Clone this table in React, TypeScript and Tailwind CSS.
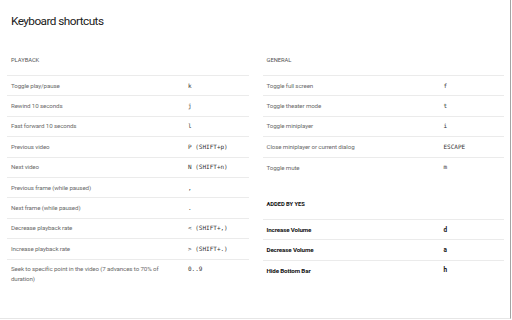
import React from 'react';

interface Shortcut {
  label: string;
  keys: string;
}

const PLAYBACK: Shortcut[] = [
  { label: 'Toggle play/pause', keys: 'k' },
  { label: 'Rewind 10 seconds', keys: 'j' },
  { label: 'Fast forward 10 seconds', keys: 'l' },
  { label: 'Previous video', keys: 'P (SHIFT+p)' },
  { label: 'Next video', keys: 'N (SHIFT+n)' },
  { label: 'Previous frame (while paused)', keys: ',' },
  { label: 'Next frame (while paused)', keys: '.' },
  { label: 'Decrease playback rate', keys: '< (SHIFT+,)' },
  { label: 'Increase playback rate', keys: '> (SHIFT+.)' },
  { label: 'Seek to specific point in the video (7 advances to 70% of duration)', keys: '0..9' },
];

const GENERAL: Shortcut[] = [
  { label: 'Toggle full screen', keys: 'f' },
  { label: 'Toggle theater mode', keys: 't' },
  { label: 'Toggle miniplayer', keys: 'i' },
  { label: 'Close miniplayer or current dialog', keys: 'ESCAPE' },
  { label: 'Toggle mute', keys: 'm' },
];

const ADDED: Shortcut[] = [
  { label: 'Increase Volume', keys: 'd' },
  { label: 'Decrease Volume', keys: 'a' },
  { label: 'Hide Bottom Bar', keys: 'h' },
];

const SectionHeader = ({ title, strong }: { title: string; strong?: boolean }) => (
  <div
    className={`h-[30px] flex items-center pl-[4px] text-[5.8px] uppercase tracking-[-0.05px] ${
      strong ? 'font-bold text-[#111]' : 'text-[#555]'
    }`}
  >
    {title}
  </div>
);

const ShortcutList = ({ items, strong }: { items: Shortcut[]; strong?: boolean }) => (
  <div className="border-t border-[#ebebeb] divide-y divide-[#ebebeb]">
    {items.map(item => (
      <div key={item.label} className="flex items-center min-h-[20.4px] py-[4.7px] pl-[4px] leading-[10px]">
        <div
          className={`w-[177px] shrink-0 pr-[16px] text-[6.2px] tracking-[-0.12px] ${
            strong ? 'font-bold text-[#111]' : 'text-[#6b6b6b]'
          }`}
        >
          {item.label}
        </div>
        <div
          className={
            strong
              ? 'self-start text-[6.4px] font-bold text-[#111]'
              : "self-start text-[6px] text-[#333] font-['DejaVu_Sans_Mono',monospace]"
          }
        >
          {item.keys}
        </div>
      </div>
    ))}
  </div>
);

export default function App() {
  return (
    <div className="w-[511px] h-[319px] bg-white border-r border-b border-r-[#a3a3a3] border-b-[#e6e6e6] font-['Roboto',sans-serif] overflow-hidden">
      <h1 className="pl-[11px] pt-[13px] text-[11.8px] leading-[16px] tracking-[-0.55px] text-[#212121] font-normal">
        Keyboard shortcuts
      </h1>
      <div className="mt-[16px] pl-[7px] pr-[6px] grid grid-cols-2 gap-x-[14px]">
        <div>
          <SectionHeader title="Playback" />
          <ShortcutList items={PLAYBACK} />
        </div>
        <div>
          <SectionHeader title="General" />
          <ShortcutList items={GENERAL} />
          <div className="mt-[11px]">
            <SectionHeader title="Added by YES" strong />
            <ShortcutList items={ADDED} strong />
          </div>
        </div>
      </div>
    </div>
  );
}
